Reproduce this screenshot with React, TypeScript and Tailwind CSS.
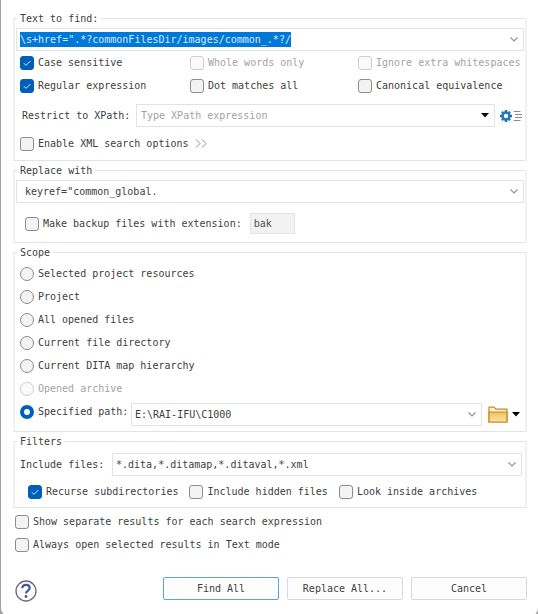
import { useEffect, useRef, useState } from 'react';
import type { ReactNode } from 'react';

function Tick({
  label,
  checked = false,
  disabled = false,
}: {
  label: string;
  checked?: boolean;
  disabled?: boolean;
}) {
  return (
    <label className="flex items-center gap-1 whitespace-nowrap text-[#404040] has-disabled:text-[#a3a3a3]">
      <span className="grid shrink-0">
        <input
          type="checkbox"
          defaultChecked={checked}
          disabled={disabled}
          className="peer col-start-1 row-start-1 size-[14px] appearance-none rounded-[3px] border border-[#8c8c8c] bg-[#f3f3f3] checked:border-[#005fb8] checked:bg-[#005fb8] disabled:border-[#cfcfcf] disabled:bg-[#fafafa]"
        />
        <svg
          viewBox="0 0 14 14"
          className="pointer-events-none invisible col-start-1 row-start-1 size-[14px] peer-checked:visible"
          fill="none"
          stroke="#d5e6f6"
          strokeWidth="1"
        >
          <path d="M3.8 7.2 6 9.4 10.4 5" />
        </svg>
      </span>
      {label}
    </label>
  );
}

function Radio({
  label,
  checked = false,
  disabled = false,
}: {
  label: string;
  checked?: boolean;
  disabled?: boolean;
}) {
  return (
    <label className="flex items-center gap-1 whitespace-nowrap text-[#404040] has-disabled:text-[#a3a3a3]">
      <input
        type="radio"
        name="scope"
        defaultChecked={checked}
        disabled={disabled}
        className="size-[14px] shrink-0 appearance-none rounded-full border border-[#8c8c8c] bg-[#f3f3f3] checked:border-4 checked:border-[#005fb8] checked:bg-white disabled:border-[#cfcfcf] disabled:bg-[#fafafa]"
      />
      {label}
    </label>
  );
}

function Group({ title, className, children }: { title: string; className: string; children: ReactNode }) {
  return (
    <fieldset className={`min-w-0 border-x-2 border-y border-x-[#f1f1f1] border-y-[#e3e3e3] px-px ${className}`}>
      <legend className="ml-px px-[3px] text-[#404040]">{title}</legend>
      {children}
    </fieldset>
  );
}

function Chevron() {
  return (
    <svg viewBox="0 0 8 5" className="h-[5px] w-2" fill="none" stroke="#949494" strokeWidth="1.2">
      <path d="M0.5 0.5 4 4 7.5 0.5" />
    </svg>
  );
}

function Triangle() {
  return (
    <svg viewBox="0 0 8 5" className="h-[5px] w-2" fill="#000">
      <path d="M0 0h8L4 4.6z" />
    </svg>
  );
}

function Combo({
  id,
  name,
  value,
  placeholder,
  className = '',
  selected = false,
  solidArrow = false,
}: {
  id?: string;
  name: string;
  value?: string;
  placeholder?: string;
  className?: string;
  selected?: boolean;
  solidArrow?: boolean;
}) {
  const ref = useRef<HTMLInputElement>(null);
  useEffect(() => {
    if (selected && ref.current) {
      ref.current.focus();
      ref.current.select();
    }
  }, [selected]);
  return (
    <div className={`flex h-[23px] min-w-0 flex-1 items-center border border-[#e3e3e3] bg-white ${className}`}>
      <input
        ref={ref}
        id={id}
        aria-label={id ? undefined : name}
        type="text"
        defaultValue={value}
        placeholder={placeholder}
        spellCheck={false}
        className="h-[15px] min-w-0 flex-1 text-[#404040] outline-none selection:bg-[#0078d7] selection:text-[#d6ebff] placeholder:text-[#a3a3a3]"
      />
      <button type="button" aria-label={`${name} history`} className="flex h-full w-[18px] items-center justify-center">
        {solidArrow ? <Triangle /> : <Chevron />}
      </button>
    </div>
  );
}

function Gear() {
  return (
    <svg viewBox="0 0 22 12" className="h-3 w-[22px]">
      <g fill="none" stroke="#2277b6">
        <circle cx="6" cy="6" r="3.5" strokeWidth="2.6" />
        <path d="M6 0v2M6 10v2M0 6h2M10 6h2" strokeWidth="2.4" />
        <path d="M1.800 1.800 3.300 3.300M8.700 8.700l1.500 1.500M1.800 10.200l1.500-1.500M8.700 3.300l1.500-1.500" strokeWidth="2.2" />
      </g>
      <path d="M13.500 1.500h7M15 4.500h7M15 7.500h7M13.500 10.500h7" stroke="#8d8d8d" strokeWidth="1.2" />
    </svg>
  );
}

function Folder() {
  return (
    <svg viewBox="0 0 20 17" className="h-[17px] w-5">
      <defs>
        <linearGradient id="folder" x1="0" y1="0" x2="0" y2="1">
          <stop offset="0" stopColor="#f0bf5e" />
          <stop offset="1" stopColor="#fbe3a6" />
        </linearGradient>
      </defs>
      <path d="M1 16V1.200h5L8 3.200h11V16z" fill="#fdf3d8" stroke="#c98a1c" strokeWidth="1.200" />
      <path d="M1 6h18v10H1z" fill="url(#folder)" stroke="#c98a1c" strokeWidth="1.200" />
    </svg>
  );
}

function PushButton({ children, primary = false }: { children: ReactNode; primary?: boolean }) {
  return (
    <button
      type="button"
      className={`h-[23px] w-[116px] rounded-[2px] border bg-[#fdfdfd] text-[#404040] ${
        primary ? 'border-[#5ba3dc]' : 'border-[#d9d9d9]'
      }`}
    >
      {children}
    </button>
  );
}

export default function App() {
  const [extension, setExtension] = useState('bak');
  return (
    <div className="bg-[#a3a3a3] pl-px font-['DejaVu_Sans_Mono','Liberation_Mono',monospace] text-[10px] leading-[15px]">
      <form
        className="flex flex-col gap-[2px] rounded-b-lg bg-white pt-[11px] pr-[11px] pb-[14px] pl-3"
        onSubmit={(event) => event.preventDefault()}
      >
        <Group title="Text to find:" className="pb-[5px]">
          <div className="flex pt-[2px]">
            <Combo name="Text to find" value={'\\s+href=".*?commonFilesDir/images/common_.*?/'} selected className="pl-[3px]" />
          </div>
          <div className="grid auto-rows-[23px] grid-cols-[170px_168px_1fr] pl-1">
            <Tick label="Case sensitive" checked />
            <Tick label="Whole words only" disabled />
            <Tick label="Ignore extra whitespaces" disabled />
            <Tick label="Regular expression" checked />
            <Tick label="Dot matches all" />
            <Tick label="Canonical equivalence" />
          </div>
          <div className="flex items-center pt-[7px] pr-[2px] pl-[6px]">
            <label htmlFor="xpath" className="w-[114px] shrink-0 whitespace-nowrap text-[#404040]">
              Restrict to XPath:
            </label>
            <Combo id="xpath" name="XPath" placeholder="Type XPath expression" solidArrow className="pl-1" />
            <button type="button" aria-label="XPath options" className="ml-[5px]">
              <Gear />
            </button>
          </div>
          <div className="flex h-7 items-center gap-[6px] pt-[5px] pl-1">
            <Tick label="Enable XML search options" />
            <button type="button" aria-label="Show XML search options">
              <svg viewBox="0 0 12 9" className="h-[9px] w-3" fill="none" stroke="#909090" strokeWidth="1">
                <path d="M1 0.500 5 4.500 1 8.500M7 0.500 11 4.500 7 8.500" />
              </svg>
            </button>
          </div>
        </Group>

        <Group title="Replace with" className="pb-2">
          <div className="flex pt-[2px]">
            <Combo name="Replace with" value={'keyref="common_global.'} className="pl-2" />
          </div>
          <div className="flex items-center gap-2 pt-[10px] pl-[9px]">
            <Tick label="Make backup files with extension:" />
            <input
              aria-label="Backup extension"
              type="text"
              value={extension}
              onChange={(event) => setExtension(event.target.value)}
              className="h-[21px] w-[45px] border border-[#e3e3e3] bg-[#f2f2f2] px-[3px] text-[#505050]"
            />
          </div>
        </Group>

        <Group title="Scope" className="pb-[5px]">
          <div className="grid auto-rows-[23px] pt-[2px] pl-1">
            <Radio label="Selected project resources" />
            <Radio label="Project" />
            <Radio label="All opened files" />
            <Radio label="Current file directory" />
            <Radio label="Current DITA map hierarchy" />
            <Radio label="Opened archive" disabled />
          </div>
          <div className="flex pt-[3px] pr-1 pl-1">
            <div className="flex h-[17px] w-[111px] shrink-0">
              <Radio label="Specified path:" checked />
            </div>
            <Combo name="Specified path" value="E:\RAI-IFU\C1000" className="pl-[3px]" />
            <button type="button" aria-label="Browse" className="ml-[6px] flex items-center gap-1">
              <Folder />
              <Triangle />
            </button>
          </div>
        </Group>

        <Group title="Filters" className="pb-1">
          <div className="flex items-center pt-1 pr-[2px] pl-1">
            <label htmlFor="include" className="w-[92px] shrink-0 whitespace-nowrap text-[#404040]">
              Include files:
            </label>
            <Combo id="include" name="Include files" value="*.dita,*.ditamap,*.ditaval,*.xml" className="pl-[3px]" />
          </div>
          <div className="flex h-[27px] items-center gap-[11px] pt-1 pl-3">
            <Tick label="Recurse subdirectories" checked />
            <Tick label="Include hidden files" />
            <Tick label="Look inside archives" />
          </div>
        </Group>

        <div className="grid auto-rows-[23px] pl-[2px]">
          <Tick label="Show separate results for each search expression" />
          <Tick label="Always open selected results in Text mode" />
        </div>

        <div className="flex items-start justify-between pt-[19px]">
          <button type="button" aria-label="Help" className="mt-[3px] ml-[2px] h-[22px] w-[22px]">
            <svg viewBox="0 0 22 22" className="size-[22px]" fill="none">
              <circle cx="11" cy="11" r="10" stroke="#6b6b6b" strokeWidth="1.300" />
              <path
                d="M7.300 8.300C7.300 3.700 14.700 3.900 14.700 8.100 14.700 10.700 11 10.600 11 13.600"
                stroke="#4059a3"
                strokeWidth="2.200"
              />
              <circle cx="11" cy="16.500" r="1.400" fill="#4059a3" />
            </svg>
          </button>
          <div className="flex gap-2">
            <PushButton primary>Find All</PushButton>
            <PushButton>Replace All...</PushButton>
            <PushButton>Cancel</PushButton>
          </div>
        </div>
      </form>
    </div>
  );
}
